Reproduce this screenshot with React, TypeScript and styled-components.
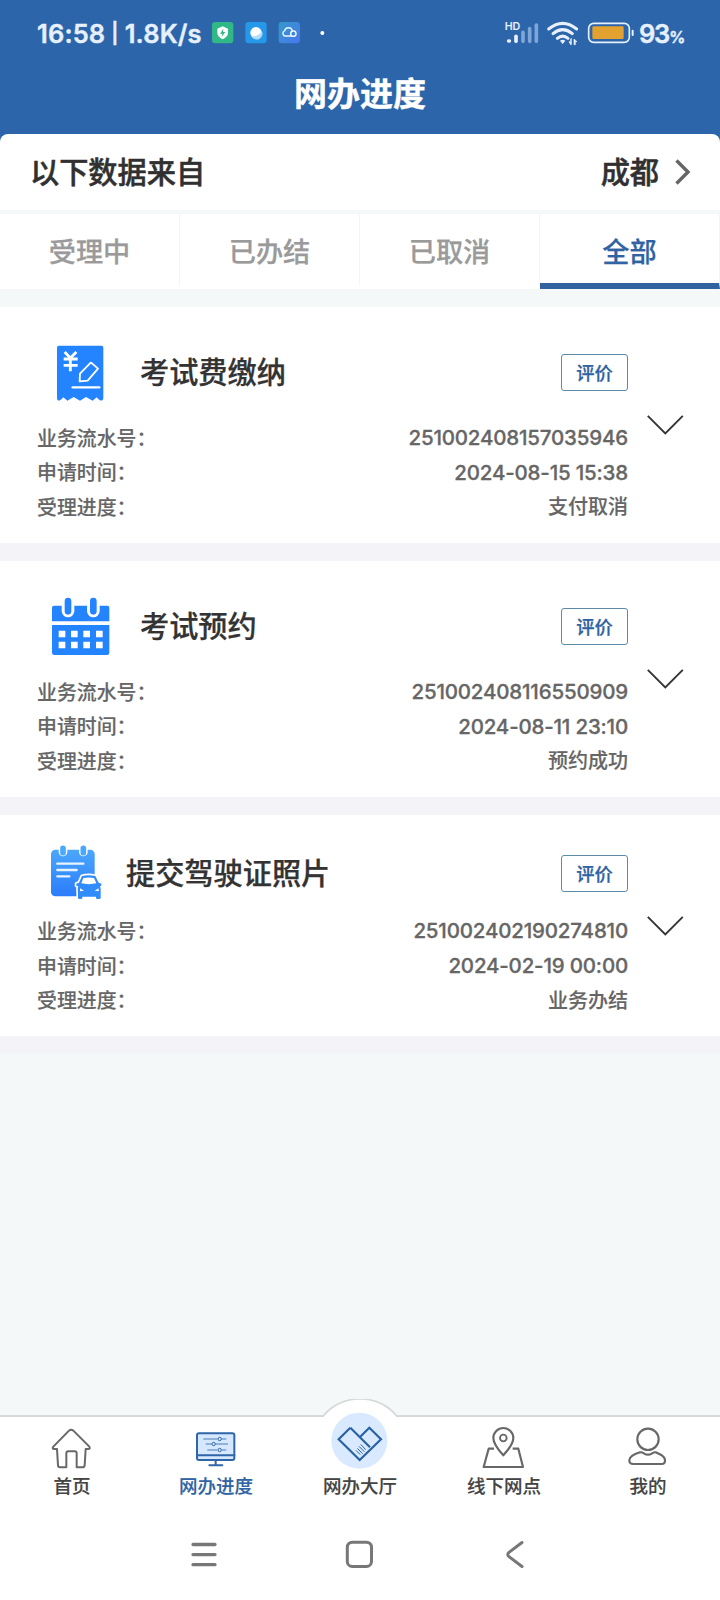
import React from "react";
import styled, { createGlobalStyle } from "styled-components";

const GlobalStyle = createGlobalStyle`
  * { box-sizing: border-box; }
  body {
    margin: 0;
    background: #f4f8f9;
    font-family: Inter, "Noto Sans CJK SC", sans-serif;
    font-weight: 500;
  }
`;

const Screen = styled.div`
  width: 720px;
  height: 1600px;
  display: flex;
  flex-direction: column;
  overflow: hidden;
  background: #f4f8f9;
`;

const Header = styled.header`
  height: 142px;
  margin-bottom: -8px;
  flex: none;
  background: #2c65a9;
`;

const StatusBar = styled.div`
  height: 66px;
  padding: 0 36px 0 37px;
  display: flex;
  align-items: center;
  color: #e6f0ff;
`;

const Clock = styled.span`
  width: 175px;
  display: flex;
  align-items: center;
  gap: 6px;
  font-size: 25.5px;
  font-weight: 600;
  letter-spacing: 0.15px;
  white-space: nowrap;
  -webkit-text-stroke: 0.4px currentColor;
`;

const ClockBar = styled.span`
  font-size: 20px;
  margin-top: -1px;
`;

const StatusIcons = styled.svg`
  display: block;
  flex: none;
`;

const Spacer = styled.div`
  flex: 1;
`;

const Battery = styled.span`
  width: 44px;
  margin-left: -1px;
  margin-right: 1px;
  font-size: 25.5px;
  font-weight: 600;
  letter-spacing: -1.2px;
  white-space: nowrap;
  -webkit-text-stroke: 0.4px currentColor;
`;

const Percent = styled.small`
  font-size: 16px;
`;

const PageTitle = styled.h1`
  margin: 0;
  height: 54px;
  line-height: 52px;
  text-align: center;
  font-family: "Noto Sans CJK SC", sans-serif;
  font-size: 33px;
  font-weight: 700;
  color: #fff;
  -webkit-text-stroke: 0.4px #fff;
`;

const SourceRow = styled.div`
  height: 76px;
  flex: none;
  padding: 0 29px 0 30px;
  display: flex;
  align-items: center;
  justify-content: space-between;
  background: #fff;
  border-radius: 8px 8px 0 0;
  font-family: "Noto Sans CJK SC", sans-serif;
  font-size: 29.2px;
  font-weight: 500;
  color: #303030;
  -webkit-text-stroke: 0.5px currentColor;
`;

const SourceText = styled.span`
  line-height: 40px;
  padding-bottom: 4px;
`;

const City = styled.div`
  display: flex;
  align-items: center;
  gap: 16px;
`;

const Tabs = styled.nav`
  margin: 4px 0 18px;
  height: 75px;
  flex: none;
  display: flex;
  background: #fff;
`;

const Tab = styled.button<{ $active?: boolean }>`
  flex: 1;
  height: 75px;
  padding: 2px 0 0;
  border: 0;
  border-right: 1px solid #f3f6f7;
  border-bottom: 6px solid ${(p) => (p.$active ? "#32629f" : "#fff")};
  background: none;
  font-family: "Noto Sans CJK SC", sans-serif;
  font-size: 27.2px;
  font-weight: 500;
  line-height: 40px;
  color: ${(p) => (p.$active ? "#2f63a2" : "#9a9a9a")};
  -webkit-text-stroke: 0.25px currentColor;
`;

const Card = styled.article<{ $compact?: boolean }>`
  height: ${(p) => (p.$compact ? 221 : 236)}px;
  padding: ${(p) => (p.$compact ? 26 : 33)}px 36px 0 37px;
  flex: none;
  display: flex;
  background: #fff;
`;

const CardGap = styled.div`
  height: 18px;
  flex: none;
  background: #f3f3f8;
`;

const CardBody = styled.div`
  width: 591px;
`;

const CardHead = styled.div<{ $compact?: boolean }>`
  height: 65px;
  margin-bottom: ${(p) => (p.$compact ? 7.6 : 15.2)}px;
  display: flex;
  align-items: center;
`;

const CardTitle = styled.h2`
  margin: 0;
  padding-bottom: 5px;
  flex: 1;
  font-family: "Noto Sans CJK SC", sans-serif;
  font-size: 29.2px;
  font-weight: 500;
  line-height: 40px;
  color: #333;
  -webkit-text-stroke: 0.25px currentColor;
`;

const RateButton = styled.button`
  width: 67px;
  height: 37px;
  padding: 0 0 2px;
  border: 1px solid #5c8aa8;
  border-radius: 3px;
  background: #fff;
  font-family: "Noto Sans CJK SC", sans-serif;
  font-size: 18.3px;
  font-weight: 500;
  line-height: 30px;
  color: #2f63a2;
  -webkit-text-stroke: 0.25px currentColor;
`;

const Field = styled.div`
  height: 34.7px;
  display: flex;
  align-items: center;
  justify-content: space-between;
  font-size: 20px;
  line-height: 34px;
  color: #666;
`;

const Label = styled.span`
  font-family: "Noto Sans CJK SC", sans-serif;
  font-size: 19.9px;
  -webkit-text-stroke: 0.15px currentColor;
`;

const Value = styled.span<{ $numeric?: boolean }>`
  padding-top: 1px;
  font-size: ${(p) => (p.$numeric ? 20.5 : 20)}px;
  letter-spacing: ${(p) => (p.$numeric ? -0.18 : 0)}px;
  -webkit-text-stroke: ${(p) => (p.$numeric ? 0.3 : 0.15)}px currentColor;
`;

const Chevron = styled.div<{ $compact?: boolean }>`
  width: 56px;
  height: 100%;
  display: flex;
  align-items: center;
  justify-content: flex-end;
  padding-bottom: ${(p) => (p.$compact ? 26 : 33)}px;
`;

const BottomNav = styled.nav`
  position: relative;
  height: 91px;
  margin-top: auto;
  flex: none;
  display: flex;
  background: #fff;
  border-top: 2px solid #d6d8d9;
`;

const Bump = styled.svg`
  position: absolute;
  left: 320px;
  top: -18px;
`;

const NavItem = styled.a<{ $active?: boolean }>`
  position: relative;
  flex: 1;
  padding-top: 7px;
  display: flex;
  flex-direction: column;
  align-items: center;
  font-family: "Noto Sans CJK SC", sans-serif;
  font-size: 18.5px;
  line-height: 26px;
  color: ${(p) => (p.$active ? "#2f63a2" : "#444")};
  -webkit-text-stroke: 0.15px currentColor;
`;

const NavIcon = styled.svg`
  width: 48px;
  height: 48px;
  overflow: visible;
`;

const SystemNav = styled.div`
  height: 94px;
  flex: none;
  padding-top: 33px;
  display: flex;
  justify-content: center;
  gap: 125px;
  background: #fff;
`;

const ReceiptIcon = () => (
  <svg width="103" height="65" viewBox="111 120 309 195">
    <path d="M176 137H304Q310 137 310 143V295Q310 302 303 302Q299 302 290 292L278 302L258 291L240 302L221 291L202 302L190 292Q181 302 177 302Q171 302 171 295V143Q171 137 176 137Z" fill="#2484ff" />
    <g fill="none" stroke="#fff">
      <path d="M194 156L211 174L229 156M211 174V214M191 177H233M191 196H233" strokeWidth="8.5" />
      <path d="M276 190L294 206L263 242L239 244L240 221L270 190Q273 187 276 190Z" strokeWidth="5.5" strokeLinejoin="round" />
      <path d="M218 262H298" strokeWidth="7" strokeLinecap="round" />
    </g>
  </svg>
);

const CalendarIcon = () => (
  <svg width="103" height="65" viewBox="111 132 309 195">
    <path d="M162 167H322Q328 167 328 173V214H156V173Q156 167 162 167ZM156 225H328V308Q328 315 321 315H163Q156 315 156 308Z" fill="#2484ff" />
    <path d="M185 160V183A19 19 0 0 0 223 183V160ZM261 160V183A19 19 0 0 0 299 183V160Z" fill="#fff" />
    <path d="M204 153V184M280 153V184" stroke="#2484ff" strokeWidth="20" strokeLinecap="round" />
    <path d="M176 242h20v20h-20zM213 242h20v20h-20zM250 242h20v20h-20zM288 242h20v20h-20zM176 275h20v20h-20zM213 275h20v20h-20zM250 275h20v20h-20zM288 275h20v20h-20z" fill="#fff" />
  </svg>
);

const LicenceIcon = () => (
  <svg width="89" height="65" viewBox="111 123 267 195">
    <defs>
      <linearGradient id="licence" x1="0" y1="0" x2="0" y2="1">
        <stop offset="0" stopColor="#4ba7fc" />
        <stop offset="1" stopColor="#2b7cfb" />
      </linearGradient>
    </defs>
    <rect x="153" y="149" width="131" height="140" rx="13" fill="url(#licence)" />
    <path d="M189 147V156M250 147V156" stroke="#fff" strokeWidth="26" strokeLinecap="round" />
    <path d="M189 145V158M250 145V158" stroke="#4ba7fc" strokeWidth="17" strokeLinecap="round" />
    <path d="M172 191H250M172 210H230M172 229H208" stroke="#e7f4ff" strokeWidth="7" strokeLinecap="round" />
    <path
      d="M246 228Q266 223 286 228L296 248L304 251V257L300 259Q303 266 302 275V293Q302 297 298 297H292Q288 297 288 293V290H247V293Q247 297 243 297H238Q234 297 234 293V275Q232 266 235 259L229 257V251L237 248Z"
      fill="#318cfb"
      stroke="#fff"
      strokeWidth="10"
      strokeLinejoin="round"
      paintOrder="stroke"
    />
    <path d="M250 234Q266 231 282 234L289 250Q267 255 244 250ZM240 265L252 272L240 274ZM296 265L284 272L296 274Z" fill="#fff" />
  </svg>
);

const records = [
  { title: "考试费缴纳", Icon: ReceiptIcon, serial: "251002408157035946", time: "2024-08-15 15:38", status: "支付取消", compact: false },
  { title: "考试预约", Icon: CalendarIcon, serial: "251002408116550909", time: "2024-08-11 23:10", status: "预约成功", compact: false },
  { title: "提交驾驶证照片", Icon: LicenceIcon, serial: "251002402190274810", time: "2024-02-19 00:00", status: "业务办结", compact: true },
];

const tabs = ["受理中", "已办结", "已取消", "全部"];

const navItems = [
  {
    label: "首页",
    icon: (
      <NavIcon viewBox="144 132 144 144" fill="none" stroke="#686868" strokeWidth="6" strokeLinejoin="round">
        <path d="M207 152Q213 147 220 152L268 200Q272 207 264 207H257L254 256Q253 262 247 262H230V220Q230 214 224 214H205Q199 214 199 220V262H180Q174 262 174 256L171 207H163Q155 207 160 200Z" />
      </NavIcon>
    ),
  },
  {
    label: "网办进度",
    active: true,
    icon: (
      <NavIcon viewBox="576 132 144 144" fill="none" stroke="#2f66a7" strokeWidth="6">
        <rect x="591" y="160" width="112" height="80" rx="6" fill="#d6e8ff" />
        <path d="M591 226H703M647 240V255M628 256H667" strokeLinecap="round" />
        <path d="M610 177H652M665 177H679M617 192H635M647 192H684M622 210H652M665 210H679" strokeWidth="2.5" />
        <g strokeWidth="3">
          <circle cx="659" cy="177" r="5" />
          <circle cx="641" cy="192" r="5" />
          <circle cx="659" cy="210" r="5" />
        </g>
      </NavIcon>
    ),
  },
  {
    label: "网办大厅",
    icon: (
      <NavIcon viewBox="78 102 144 144" fill="none" stroke="#2862a3" strokeWidth="6.5">
        <circle cx="148" cy="152" r="84" fill="#d9e9ff" stroke="none" />
        <path d="M121 113L86 148L149 210L213 148L178 113L150 141M121 113L180 172" />
        <path d="M153 164L166 178M148 170L162 184M143 176L157 190M139 182L150 193" strokeWidth="3" strokeLinecap="round" />
      </NavIcon>
    ),
  },
  {
    label: "线下网点",
    icon: (
      <NavIcon viewBox="360 132 144 144" fill="none" stroke="#686868" strokeWidth="6.5" strokeLinejoin="round">
        <path d="M402 206H386L371 261H489L475 206H458" />
        <path d="M430 226Q400 193 400 174A30 30 0 0 1 460 174Q460 193 430 226Z" />
        <circle cx="430" cy="174" r="10" strokeWidth="5.5" />
      </NavIcon>
    ),
  },
  {
    label: "我的",
    icon: (
      <NavIcon viewBox="792 132 144 144" fill="none" stroke="#686868" strokeWidth="6.5" strokeLinejoin="round">
        <circle cx="864" cy="178" r="32" />
        <path d="M840 217C850 215 852 224 864 224C876 224 878 215 888 217C900 222 915 228 915 240Q916 252 905 252H820Q807 252 808 240C809 228 827 221 840 217Z" />
      </NavIcon>
    ),
  },
];

export default function App() {
  return (
    <Screen>
      <GlobalStyle />
      <Header>
        <StatusBar>
          <Clock>
            <span>16:58</span>
            <ClockBar>|</ClockBar>
            <span>1.8K/s</span>
          </Clock>
          <StatusIcons width="116" height="24" viewBox="636 63 348 72">
            <defs>
              <linearGradient id="cloud" x1="0" y1="0" x2="1" y2="1">
                <stop offset="0" stopColor="#3499c9" />
                <stop offset="1" stopColor="#4976ef" />
              </linearGradient>
            </defs>
            <rect x="636" y="66" width="64" height="64" rx="10" fill="#30b987" />
            <path d="M668 79L684 86V99Q683 111 668 118Q653 111 652 99V86Z" fill="#fff" />
            <path d="M670 86L660 101H667L665 111L676 96H669Z" fill="#30b987" />
            <rect x="736" y="66" width="64" height="64" rx="10" fill="#2698e9" />
            <circle cx="768" cy="98" r="17" fill="#fff" />
            <path d="M785 92Q781 107 755 110A17 17 0 0 0 785 92Z" fill="#b3dbfa" />
            <rect x="836" y="66" width="64" height="64" rx="10" fill="url(#cloud)" />
            <path d="M874 108H855A8.5 8.5 0 0 1 854 92A12 12 0 0 1 877 92" fill="none" stroke="#e8f5ff" strokeWidth="4.5" strokeLinecap="round" />
            <circle cx="880" cy="101" r="8" fill="none" stroke="#e8f5ff" strokeWidth="4.5" />
            <circle cx="967" cy="99" r="6" fill="#fff" />
          </StatusIcons>
          <Spacer />
          <StatusIcons width="136" height="36" viewBox="432 45 408 108">
            <g fill="none" stroke="#e6f0ff" strokeLinecap="round">
              <g strokeWidth="11">
                <path d="M446 123H448" />
                <path d="M468 109V124" />
                <path d="M489 97V124M509 86V124M529 75V124" stroke="#7ea6d8" />
              </g>
              <path d="M566 87Q608 53 650 87M579 101Q608 77 637 101M592 115Q608 102 624 115" strokeWidth="9" />
              <rect x="686" y="70" width="122" height="57" rx="15" strokeWidth="5" />
              <path d="M818 92V105" strokeWidth="6" />
            </g>
            <path d="M600 122Q608 116 616 122L608 132Z" fill="#e6f0ff" />
            <path d="M627 125H632V117L634 115V134H632ZM642 134V117L651 125H646V134Z" fill="#e6f0ff" stroke="#e6f0ff" strokeWidth="2" />
            <rect x="697" y="79" width="94" height="38" rx="4" fill="#e3a12f" />
            <text x="434" y="91" fontFamily="Inter" fontSize="32" fontWeight="600" fill="#e6f0ff">HD</text>
          </StatusIcons>
          <Battery>
            93<Percent>%</Percent>
          </Battery>
        </StatusBar>
        <PageTitle>网办进度</PageTitle>
      </Header>

      <SourceRow>
        <SourceText>以下数据来自</SourceText>
        <City>
          <SourceText>成都</SourceText>
          <svg width="16" height="26" viewBox="0 0 16 26" fill="none" stroke="#666" strokeWidth="3.4">
            <path d="M1.5 1.5L13 13L1.5 24.5" />
          </svg>
        </City>
      </SourceRow>

      <Tabs>
        {tabs.map((tab) => (
          <Tab key={tab} $active={tab === "全部"}>
            {tab}
          </Tab>
        ))}
      </Tabs>

      {records.map(({ title, Icon, serial, time, status, compact }) => (
        <React.Fragment key={serial}>
          <Card $compact={compact}>
            <CardBody>
              <CardHead $compact={compact}>
                <Icon />
                <CardTitle>{title}</CardTitle>
                <RateButton>评价</RateButton>
              </CardHead>
              <Field>
                <Label>业务流水号：</Label>
                <Value $numeric>{serial}</Value>
              </Field>
              <Field>
                <Label>申请时间：</Label>
                <Value $numeric>{time}</Value>
              </Field>
              <Field>
                <Label>受理进度：</Label>
                <Value>{status}</Value>
              </Field>
            </CardBody>
            <Chevron $compact={compact}>
              <svg width="37" height="20" viewBox="0 0 37 20" fill="none" stroke="#333" strokeWidth="1.9">
                <path d="M0.8 0.8L18.3 18.3L35.8 0.8" />
              </svg>
            </Chevron>
          </Card>
          <CardGap />
        </React.Fragment>
      ))}

      <BottomNav>
        <Bump width="80" height="22" viewBox="320 1398 80 22">
          <path d="M320 1420V1416H322Q324 1416 325 1414A48 48 0 0 1 395 1414Q396 1416 398 1416H400V1420Z" fill="#fff" />
          <path d="M320 1415.2H323A48 48 0 0 1 397 1415.2H400" fill="#fff" stroke="#d6d8d9" strokeWidth="1.8" />
        </Bump>
        {navItems.map((item) => (
          <NavItem key={item.label} $active={item.active}>
            {item.icon}
            {item.label}
          </NavItem>
        ))}
      </BottomNav>

      <SystemNav>
        <svg width="30" height="30" viewBox="0 0 30 30" stroke="#777" strokeWidth="3.3" strokeLinecap="round">
          <path d="M3 5.5H25M3 15.6H25M3 25.7H25" />
        </svg>
        <svg width="30" height="30" viewBox="0 0 30 30" fill="none" stroke="#777" strokeWidth="3">
          <rect x="2.3" y="3.2" width="24.2" height="24.2" rx="5" />
        </svg>
        <svg width="30" height="30" viewBox="0 0 30 30" fill="none" stroke="#777" strokeWidth="3" strokeLinecap="round">
          <path d="M22 3.5L9 13.3Q6.5 15.5 9 17.7L22 27.5" />
        </svg>
      </SystemNav>
    </Screen>
  );
}
